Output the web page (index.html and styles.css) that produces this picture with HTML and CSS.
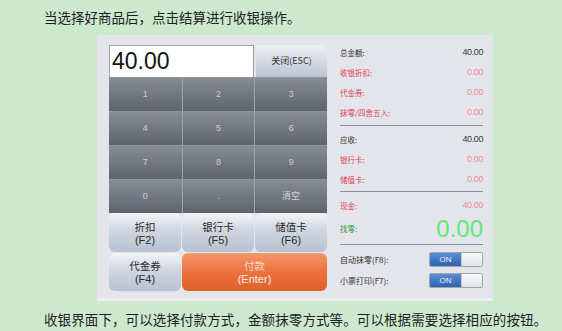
FILE: index.html
```html
<!DOCTYPE html>
<html lang="zh-CN">
  <head>
    <meta charset="UTF-8" />
    <meta name="viewport" content="width=device-width, initial-scale=1.0" />
    <title>收银</title>
    <link rel="stylesheet" href="styles.css">
  </head>
  <body>
    <p class="note">当选择好商品后，点击结算进行收银操作。</p>

    <div class="panel">
      <div class="pad">
        <div class="top">
          <div class="amount">40.00</div>
          <div class="close">关闭(ESC)</div>
        </div>

        <div class="keys">
          <div class="key">1</div>
          <div class="key">2</div>
          <div class="key">3</div>
          <div class="key">4</div>
          <div class="key">5</div>
          <div class="key">6</div>
          <div class="key">7</div>
          <div class="key">8</div>
          <div class="key">9</div>
          <div class="key">0</div>
          <div class="key">.</div>
          <div class="key">清空</div>
        </div>

        <div class="funcs">
          <div class="fn"><span>折扣</span><em>(F2)</em></div>
          <div class="fn"><span>银行卡</span><em>(F5)</em></div>
          <div class="fn"><span>储值卡</span><em>(F6)</em></div>
          <div class="fn"><span>代金券</span><em>(F4)</em></div>
          <div class="fn pay"><span>付款</span><em>(Enter)</em></div>
        </div>
      </div>

      <div class="summary">
        <div class="group">
          <div class="row"><span>总金额:</span><b>40.00</b></div>
          <div class="row red"><span>收银折扣:</span><b>0.00</b></div>
          <div class="row red"><span>代金券:</span><b>0.00</b></div>
          <div class="row red"><span>抹零/四舍五入:</span><b>0.00</b></div>
        </div>
        <div class="group">
          <div class="row"><span>应收:</span><b>40.00</b></div>
          <div class="row red"><span>银行卡:</span><b>0.00</b></div>
          <div class="row red"><span>储值卡:</span><b>0.00</b></div>
        </div>
        <div class="group">
          <div class="row red"><span>现金:</span><b>40.00</b></div>
          <div class="row change"><span>找零:</span><b>0.00</b></div>
        </div>
        <div class="opts">
          <div class="row opt">
            <span>自动抹零(F8):</span>
            <div class="toggle"><i>ON</i><s></s></div>
          </div>
          <div class="row opt">
            <span>小票打印(F7):</span>
            <div class="toggle"><i>ON</i><s></s></div>
          </div>
        </div>
      </div>
    </div>

    <p class="note bottom">收银界面下，可以选择付款方式，金额抹零方式等。可以根据需要选择相应的按钮。</p>
  </body>
</html>
```

FILE: styles.css
```css
body {
  margin: 0;
  background-color: #cce8cd;
  font-family: "Noto Sans CJK SC", "DejaVu Sans", sans-serif;
  color: #222;
}

.note {
  margin: 0;
  height: 35px;
  padding-left: 44px;
  font-size: 13.5px;
  line-height: 35px;
  color: #1e1e1e;
}

.note.bottom {
  height: auto;
  margin-top: 7px;
  line-height: 22px;
  letter-spacing: 0.1px;
}

.panel {
  display: grid;
  grid-template-columns: 218px 143px;
  column-gap: 13px;
  width: 374px;
  height: 256px;
  margin-left: 97px;
  padding: 7px 10px 0 12px;
  background-color: #e4e5eb;
  border-bottom: 3px solid #eeeef3;
}

/* left side: input, keypad, function keys */

.pad {
  padding-top: 3px;
}

.top {
  display: flex;
  gap: 2px;
  height: 32px;
}

.amount {
  width: 141px;
  border: 1px solid #a0a2a8;
  border-bottom: none;
  background-color: #fff;
  padding-left: 2px;
  font-family: "Liberation Sans", Arial, sans-serif;
  font-size: 23px;
  line-height: 31px;
  color: #111;
}

.close {
  flex: 1;
  background: linear-gradient(#eceef2, #d3d8e0 55%, #b9c3d0);
  border-radius: 0 7px 0 0;
  font-size: 9px;
  line-height: 32px;
  text-align: center;
  color: #333;
}

.keys {
  display: grid;
  grid-template-columns: repeat(3, 1fr);
  grid-auto-rows: 34px;
  background-color: #5c6069;
}

.key {
  background: linear-gradient(#878b95, #6f737d 60%, #5f636c);
  border-left: 1px solid #9ba1ad;
  border-top: 1px solid #90949e;
  font-family: "Liberation Sans", Arial, sans-serif;
  font-size: 9px;
  line-height: 33px;
  text-align: center;
  color: #cfd1d6;
}

.key:nth-child(3n + 1) {
  border-left: none;
}

.funcs {
  display: grid;
  grid-template-columns: repeat(3, 1fr);
  grid-template-rows: 39px 38px;
  gap: 1px;
}

.fn {
  display: flex;
  flex-direction: column;
  align-items: center;
  justify-content: center;
  background: linear-gradient(#f3f4f7, #d2d8e2 40%, #b7c1d0);
  border-radius: 6px;
  font-size: 10.5px;
  line-height: 14px;
  color: #2a2a2a;
}

.fn em {
  font-style: normal;
  font-family: "Liberation Sans", Arial, sans-serif;
  font-size: 11px;
  line-height: 12px;
}

.fn.pay {
  grid-column: span 2;
  background: linear-gradient(#f49a6a, #ec7440 45%, #e0602a);
  color: #fcd9c8;
}

.fn.pay em {
  color: #fdeee6;
}

/* right side: totals */

.summary {
  display: flex;
  flex-direction: column;
}

.row {
  display: flex;
  align-items: center;
  justify-content: space-between;
  height: 20px;
  font-size: 7.5px;
  color: #333;
}

.row b {
  font-weight: normal;
  font-family: "Liberation Sans", Arial, sans-serif;
  font-size: 9px;
  letter-spacing: -0.4px;
  color: #3a3a3a;
}

.row.red span {
  color: #e0414f;
}

.row.red b {
  color: #f08aa2;
}

.group {
  padding-bottom: 2px;
  margin-bottom: 3px;
  border-bottom: 1px solid #8e9096;
}

.group:first-child {
  padding-bottom: 3px;
}

.row.change {
  height: 27px;
}

.row.change span {
  color: #2f9a3c;
}

.row.change b {
  font-size: 24px;
  letter-spacing: 0;
  color: #5fe876;
}

.opts {
  padding-top: 1px;
}

.row.opt {
  height: 21px;
  font-size: 8px;
}

.toggle {
  display: flex;
  width: 52px;
  height: 13px;
  border: 1px solid #9ea4b0;
  border-radius: 2px;
  overflow: hidden;
}

.toggle i {
  width: 31px;
  background: linear-gradient(#5a8fd2, #2f63ad);
  font-style: normal;
  font-family: "Liberation Sans", Arial, sans-serif;
  font-size: 8px;
  line-height: 13px;
  text-align: center;
  color: #e8f0fb;
}

.toggle s {
  flex: 1;
  background: linear-gradient(#fafafa, #e0e2e6);
  border-left: 1px solid #c4c8d0;
}
```
